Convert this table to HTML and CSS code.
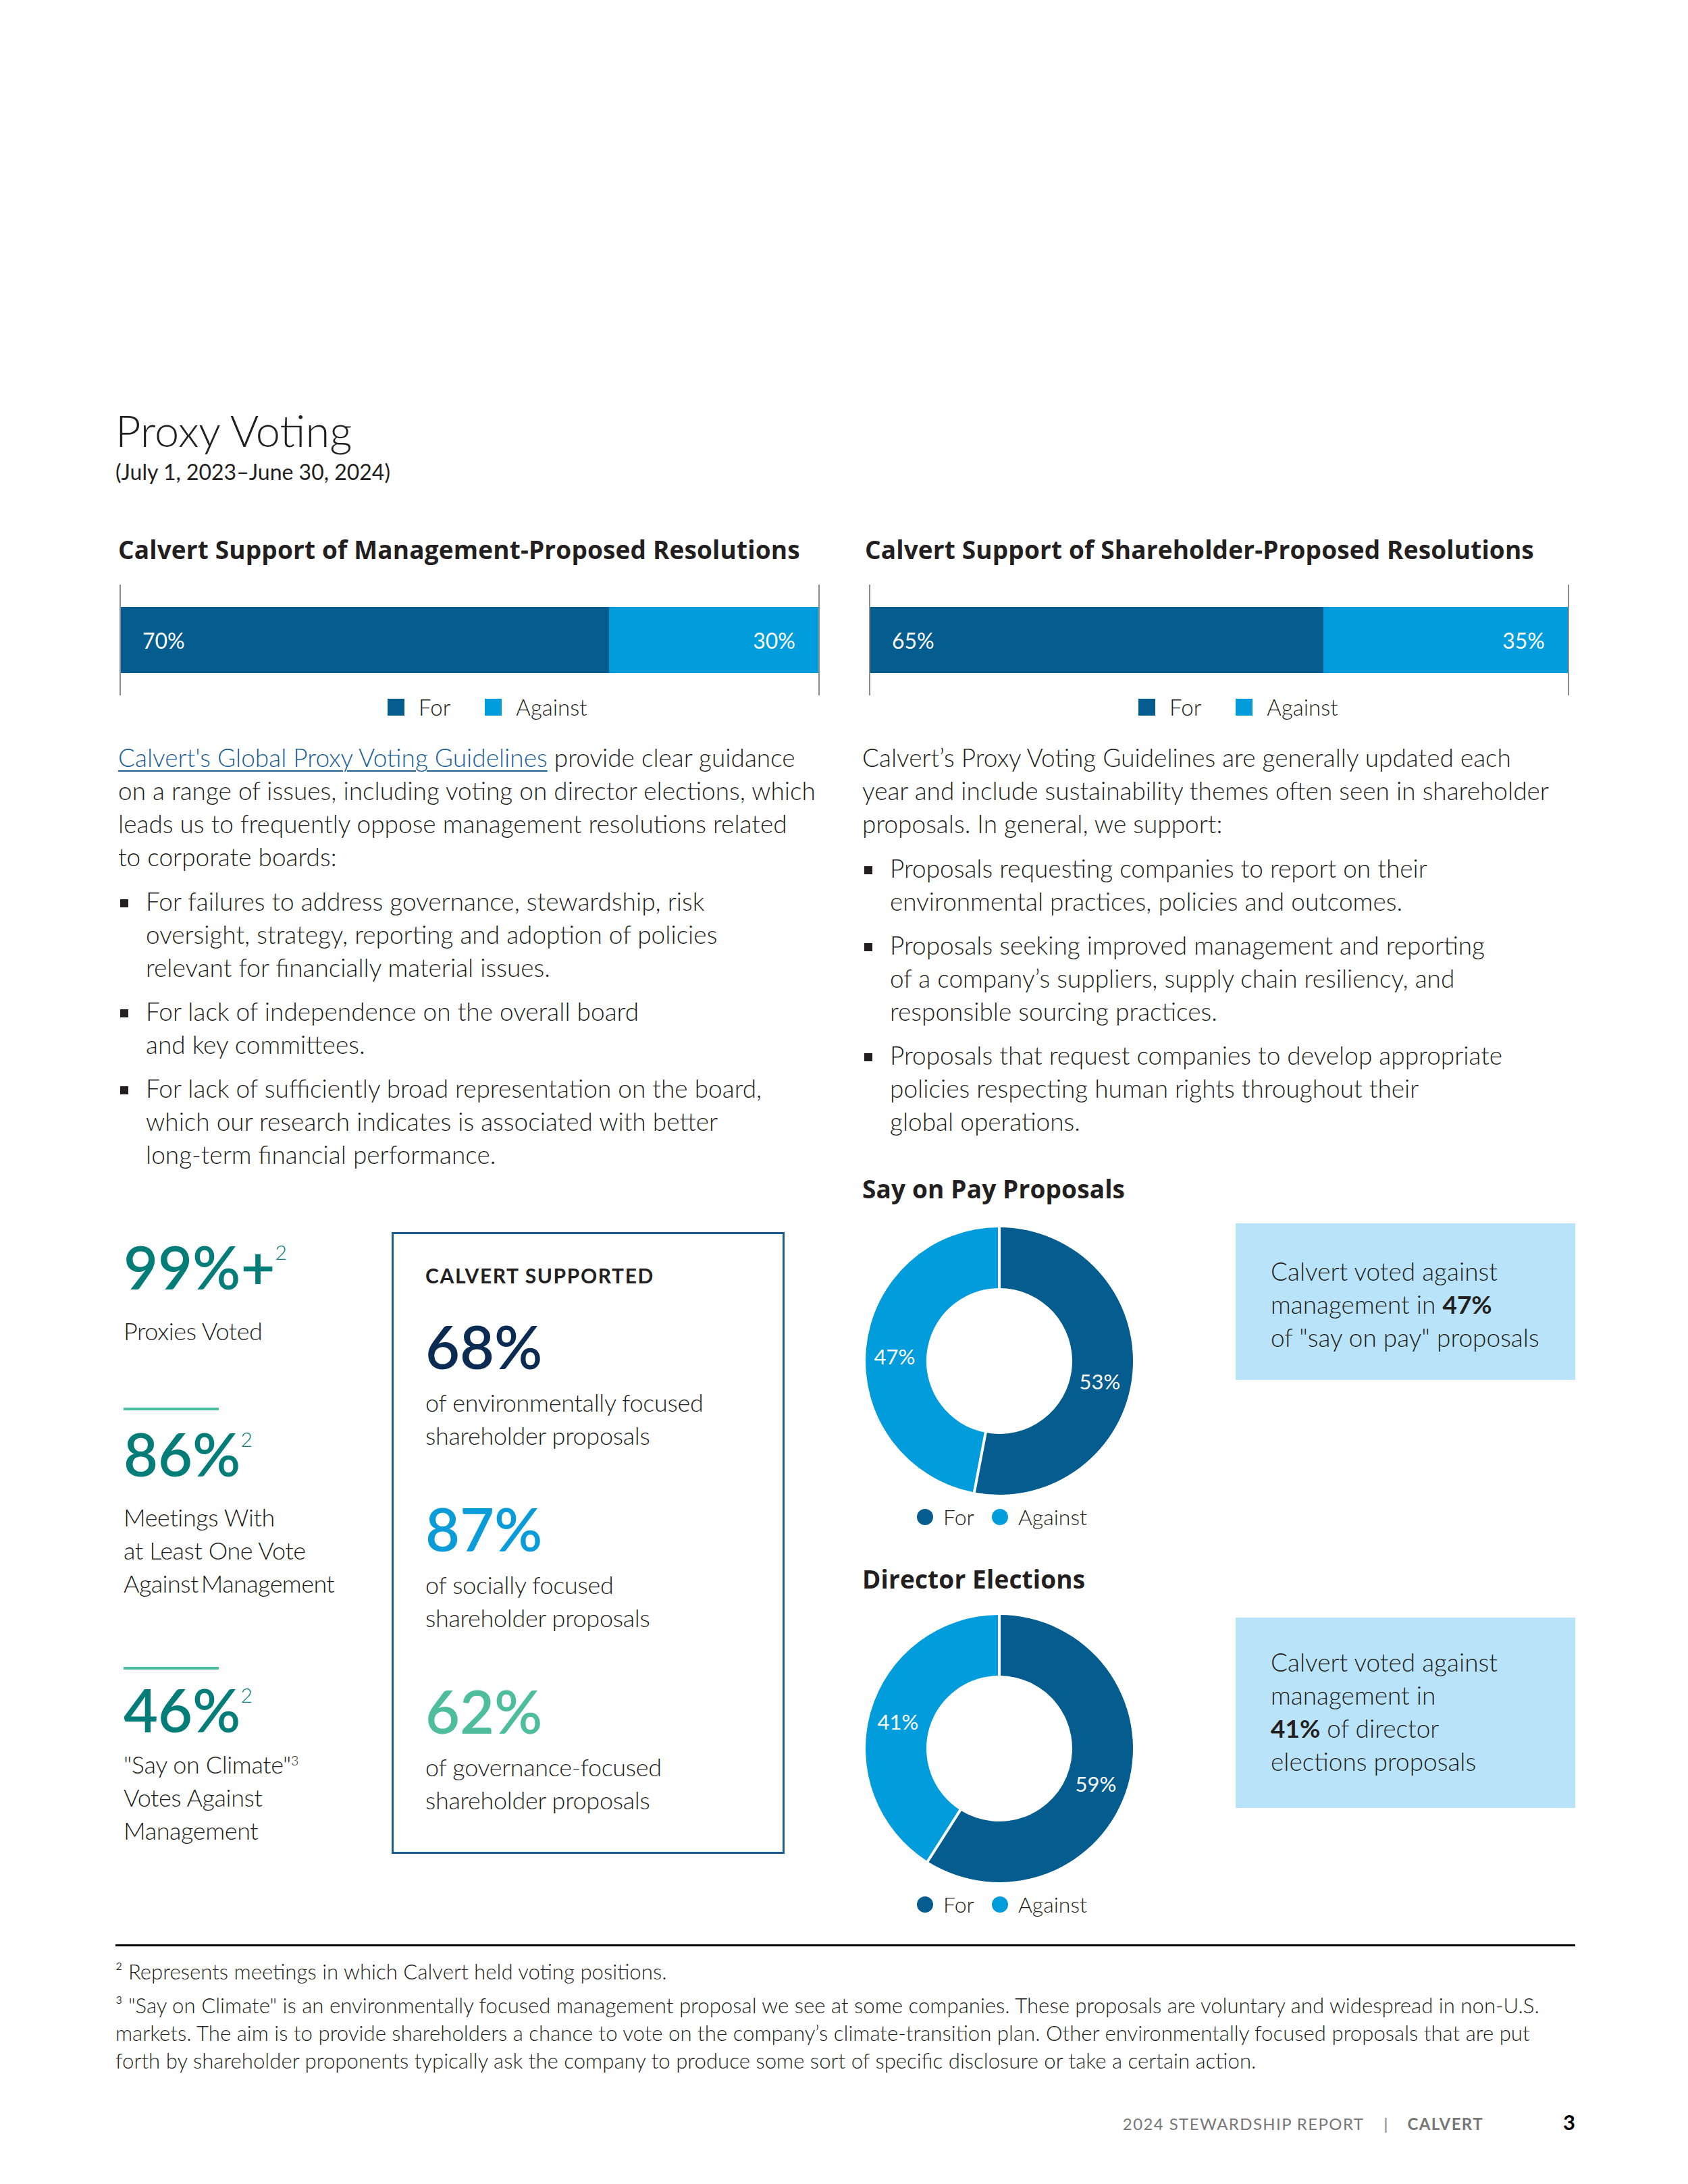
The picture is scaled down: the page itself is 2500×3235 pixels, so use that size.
FILE: index.html
```html
<!DOCTYPE html>
<html lang="en">
<head>
<meta charset="utf-8">
<title>Proxy Voting</title>
<link rel="stylesheet" href="styles.css">
</head>
<body>
<main class="page">
  <header class="page-head">
    <h1 class="title">Proxy Voting</h1>
    <p class="subtitle">(July 1, 2023–June 30, 2024)</p>
  </header>

  <div class="cols">
    <section class="col col-left">
      <h2 class="h2">Calvert Support of Management-Proposed Resolutions</h2>
      <div class="barchart barchart-left">
        <div class="bar">
          <div class="seg seg-for" style="width:70%"><span>70%</span></div>
          <div class="seg seg-against"><span>30%</span></div>
        </div>
      </div>
      <div class="legend legend-left">
        <span class="key"><i class="sq sq-for"></i>For</span>
        <span class="key"><i class="sq sq-against"></i>Against</span>
      </div>
      <p class="para"><a class="link" href="#">Calvert's Global Proxy Voting Guidelines</a> provide clear guidance<br>on a range of issues, including voting on director elections, which<br>leads us to frequently oppose management resolutions related<br>to corporate boards:</p>
      <ul class="bullets">
        <li>For failures to address governance, stewardship, risk<br>oversight, strategy, reporting and adoption of policies<br>relevant for financially material issues.</li>
        <li>For lack of independence on the overall board<br>and key committees.</li>
        <li>For lack of sufficiently broad representation on the board,<br>which our research indicates is associated with better<br>long-term financial performance.</li>
      </ul>

      <div class="stats-row">
        <div class="stats-left">
          <div class="stat-num">99%+<sup>2</sup></div>
          <p class="stat-label s1">Proxies Voted</p>
          <div class="stat-rule r1"></div>
          <div class="stat-num n2">86%<sup>2</sup></div>
          <p class="stat-label s2">Meetings With<br>at Least One Vote<br><span class="tight">Against Management</span></p>
          <div class="stat-rule r2"></div>
          <div class="stat-num n3">46%<sup>2</sup></div>
          <p class="stat-label s3">"Say on Climate"<sup class="fnref">3</sup><br>Votes Against<br>Management</p>
        </div>
        <div class="supported">
          <h3 class="sup-title">CALVERT SUPPORTED</h3>
          <div class="big big-env">68%</div>
          <p class="sup-text">of environmentally focused<br>shareholder proposals</p>
          <div class="big big-soc">87%</div>
          <p class="sup-text">of socially focused<br>shareholder proposals</p>
          <div class="big big-gov">62%</div>
          <p class="sup-text">of governance-focused<br>shareholder proposals</p>
        </div>
      </div>
    </section>

    <section class="col col-right">
      <h2 class="h2 h2-right">Calvert Support of Shareholder-Proposed Resolutions</h2>
      <div class="barchart barchart-right">
        <div class="bar">
          <div class="seg seg-for" style="width:65%"><span>65%</span></div>
          <div class="seg seg-against"><span>35%</span></div>
        </div>
      </div>
      <div class="legend legend-right">
        <span class="key"><i class="sq sq-for"></i>For</span>
        <span class="key"><i class="sq sq-against"></i>Against</span>
      </div>
      <p class="para">Calvert’s Proxy Voting Guidelines are generally updated each<br>year and include sustainability themes often seen in shareholder<br>proposals. In general, we support:</p>
      <ul class="bullets">
        <li>Proposals requesting companies to report on their<br>environmental practices, policies and outcomes.</li>
        <li>Proposals seeking improved management and reporting<br>of a company’s suppliers, supply chain resiliency, and<br>responsible sourcing practices.</li>
        <li>Proposals that request companies to develop appropriate<br>policies respecting human rights throughout their<br>global operations.</li>
      </ul>

      <h2 class="h2 chart-head ch1">Say on Pay Proposals</h2>
      <div class="donut-row dr1">
        <div class="donut-block">
          <svg class="donut" viewBox="0 0 400 400" width="400" height="400">
            <path d="M200 2 A198 198 0 1 1 162.90 394.49 L179.76 306.09 A108 108 0 1 0 200 92 Z" fill="#045c8f"/>
            <path d="M162.90 394.49 A198 198 0 0 1 200 2 L200 92 A108 108 0 0 0 179.76 306.09 Z" fill="#009cdc"/>
            <line x1="200" y1="0" x2="200" y2="94" stroke="#fff" stroke-width="4"/>
            <line x1="180.51" y1="302.16" x2="162.15" y2="398.42" stroke="#fff" stroke-width="4"/>
            <text class="dl" x="349" y="230">53%</text>
            <text class="dl" x="45" y="193">47%</text>
          </svg>
          <div class="dlegend">
            <span class="key dkey"><i class="dot dot-for"></i>For</span>
            <span class="key dkey"><i class="dot dot-against"></i>Against</span>
          </div>
        </div>
        <div class="callout co1">Calvert voted against<br>management in <b>47%</b><br>of "say on pay" proposals</div>
      </div>

      <h2 class="h2 chart-head ch2">Director Elections</h2>
      <div class="donut-row dr2">
        <div class="donut-block">
          <svg class="donut" viewBox="0 0 400 400" width="400" height="400">
            <path d="M200 2 A198 198 0 1 1 93.91 367.18 L142.13 291.19 A108 108 0 1 0 200 92 Z" fill="#045c8f"/>
            <path d="M93.91 367.18 A198 198 0 0 1 200 2 L200 92 A108 108 0 0 0 142.13 291.19 Z" fill="#009cdc"/>
            <line x1="200" y1="0" x2="200" y2="94" stroke="#fff" stroke-width="4"/>
            <line x1="144.27" y1="287.81" x2="91.76" y2="370.55" stroke="#fff" stroke-width="4"/>
            <text class="dl" x="343" y="252">59%</text>
            <text class="dl" x="50" y="160">41%</text>
          </svg>
          <div class="dlegend">
            <span class="key dkey"><i class="dot dot-for"></i>For</span>
            <span class="key dkey"><i class="dot dot-against"></i>Against</span>
          </div>
        </div>
        <div class="callout co2">Calvert voted against<br>management in<br><b>41%</b> of director<br>elections proposals</div>
      </div>
    </section>
  </div>

  <section class="notes">
    <p class="fn">² Represents meetings in which Calvert held voting positions.</p>
    <p class="fn fn2">³ "Say on Climate" is an environmentally focused management proposal we see at some companies. These proposals are voluntary and widespread in non-U.S.<br>markets. The aim is to provide shareholders a chance to vote on the company’s climate-transition plan. Other environmentally focused proposals that are put<br>forth by shareholder proponents typically ask the company to produce some sort of specific disclosure or take a certain action.</p>
  </section>

  <footer class="page-foot">
    <span class="rep">2024 STEWARDSHIP REPORT</span>
    <span class="pipe">|</span>
    <span class="brand">CALVERT</span>
    <span class="pnum">3</span>
  </footer>
</main>
</body>
</html>
```

FILE: styles.css
```css
* { box-sizing: border-box; margin: 0; padding: 0; }
html, body { background: #fff; }
body {
  width: 2500px;
  height: 3235px;
  overflow: hidden;
  font-family: Lato, "Open Sans", "Liberation Sans", sans-serif;
  font-weight: 300;
  color: #231f20;
}
.page { padding: 605px 167px 0 171px; }

.title { font-size: 65px; line-height: 64px; font-weight: 300; }
.subtitle { margin-top: 10px; font-size: 32px; line-height: 40px; font-weight: 400; }

.cols {
  display: grid;
  grid-template-columns: 1054px 1056px;
  column-gap: 52px;
  margin-top: 73px;
}
.col { display: flex; flex-direction: column; }
.col-left { padding-left: 4px; }

.h2 {
  font-family: "Open Sans", Lato, sans-serif;
  font-size: 37px;
  line-height: 44px;
  font-weight: 700;
  letter-spacing: 0.15px;
}
.h2-right { padding-left: 4px; }

.barchart {
  margin-top: 30px;
  width: 1037px;
  height: 164px;
  border-left: 2px solid #8c8c8c;
  border-right: 2px solid #8c8c8c;
  display: flex;
  align-items: center;
}
.barchart-left { margin-left: 2px; }
.barchart-right { margin-left: 10px; }
.bar { flex: 1; height: 98px; display: flex; }
.seg { display: flex; align-items: center; color: #fff; font-size: 32px; font-weight: 400; }
.seg-for { background: #045c8f; padding-left: 32px; }
.seg-against { flex: 1; background: #009cdc; justify-content: flex-end; padding-right: 34px; }

.legend {
  display: flex;
  align-items: center;
  height: 34px;
  font-size: 33px;
  line-height: 34px;
  font-weight: 300;
}
.legend-left { padding-left: 399px; }
.legend-right { padding-left: 409px; }
.key { display: flex; align-items: center; margin-right: 51px; }
.sq { display: block; width: 25px; height: 25px; margin-right: 21px; }
.sq-for { background: #045c8f; }
.sq-against { background: #009cdc; }

.para { margin-top: 33px; font-size: 37px; line-height: 49px; }
.link { color: #1c5e96; text-decoration: underline; text-decoration-thickness: 2px; text-underline-offset: 5px; }

.bullets { list-style: none; margin-top: 17px; }
.bullets li {
  display: flex;
  font-size: 37px;
  line-height: 49px;
}
.bullets li + li { margin-top: 16px; }
.bullets li::before {
  content: "";
  flex: 0 0 12px;
  height: 12px;
  margin: 22px 26px 0 3px;
  background: #231f20;
}

/* stats */
.stats-row { display: flex; margin-top: 91px; }
.stats-left { width: 405px; padding: 6px 0 0 8px; }
.stat-num {
  font-size: 88px;
  line-height: 90px;
  font-weight: 600;
  color: #047d79;
}
.stat-num sup { font-size: 30px; font-weight: 300; vertical-align: 44px; line-height: 0; }
.stat-label { font-size: 36px; line-height: 49px; letter-spacing: -0.4px; }
.stat-label .tight { word-spacing: -5px; letter-spacing: -0.6px; }
.stat-label .fnref { font-size: 20px; vertical-align: 12px; line-height: 0; }
.s1 { margin-top: 26px; }
.s2 { margin-top: 25px; }
.s3 { margin-top: 12px; }
.stat-rule { width: 141px; height: 4px; background: #4cbc9c; }
.r1 { margin-top: 89px; }
.r2 { margin-top: 99px; }
.n2 { margin-top: 19px; }
.n3 { margin-top: 14px; }

.supported {
  width: 582px;
  border: 3px solid #1a5c94;
  padding: 43px 20px 52px 47px;
}
.sup-title { font-size: 30px; line-height: 36px; font-weight: 700; letter-spacing: 1.6px; }
.big { font-size: 88px; line-height: 90px; font-weight: 600; }
.big-env { margin-top: 42px; color: #0b2b52; }
.big-soc { margin-top: 68px; color: #0a9cd9; }
.big-gov { margin-top: 68px; color: #4dbd9b; }
.sup-text { margin-top: 14px; font-size: 36px; line-height: 49px; letter-spacing: -0.3px; }

/* donuts */
.ch1 { margin-top: 54px; }
.ch2 { margin-top: 52px; }
.donut-row { display: flex; align-items: flex-start; }
.dr1 { margin-top: 33px; }
.dr2 { margin-top: 29px; }
.donut-block { width: 400px; margin-left: 3px; }
.donut { display: block; width: 400px; height: 400px; }
.dl {
  fill: #fff;
  font-family: Lato, "Open Sans", sans-serif;
  font-size: 31px;
  font-weight: 400;
  text-anchor: middle;
  dominant-baseline: central;
}
.dlegend {
  display: flex;
  align-items: center;
  margin-top: 13px;
  height: 36px;
  padding-left: 78px;
  font-size: 32px;
  line-height: 36px;
}
.dkey { margin-right: 26px; }
.dot { display: block; width: 24px; height: 24px; border-radius: 50%; margin-right: 15px; }
.dot-for { background: #045c8f; }
.dot-against { background: #009cdc; }

.callout {
  margin-left: auto;
  width: 503px;
  background: #b8e3f8;
  font-size: 37px;
  line-height: 49px;
}
.co1 { margin-top: -4px; padding: 46px 20px 39px 52px; }
.co2 { margin-top: 6px; padding: 41px 20px 45px 52px; }
.callout b { font-weight: 700; }

/* footnotes */
.notes { margin-top: 41px; border-top: 3px solid #000; padding-top: 17px; }
.fn { font-size: 31.2px; line-height: 41px; white-space: nowrap; }
.fn2 { margin-top: 9px; }

.page-foot {
  margin-top: 55px;
  display: flex;
  justify-content: flex-end;
  align-items: baseline;
  font-size: 24px;
  line-height: 30px;
  font-weight: 400;
  color: #777;
  letter-spacing: 1.4px;
}
.pipe { margin: 0 29px; letter-spacing: 0; }
.brand { font-weight: 700; }
.pnum { margin-left: 118px; color: #000; font-size: 31px; font-weight: 700; letter-spacing: 0; }
```
